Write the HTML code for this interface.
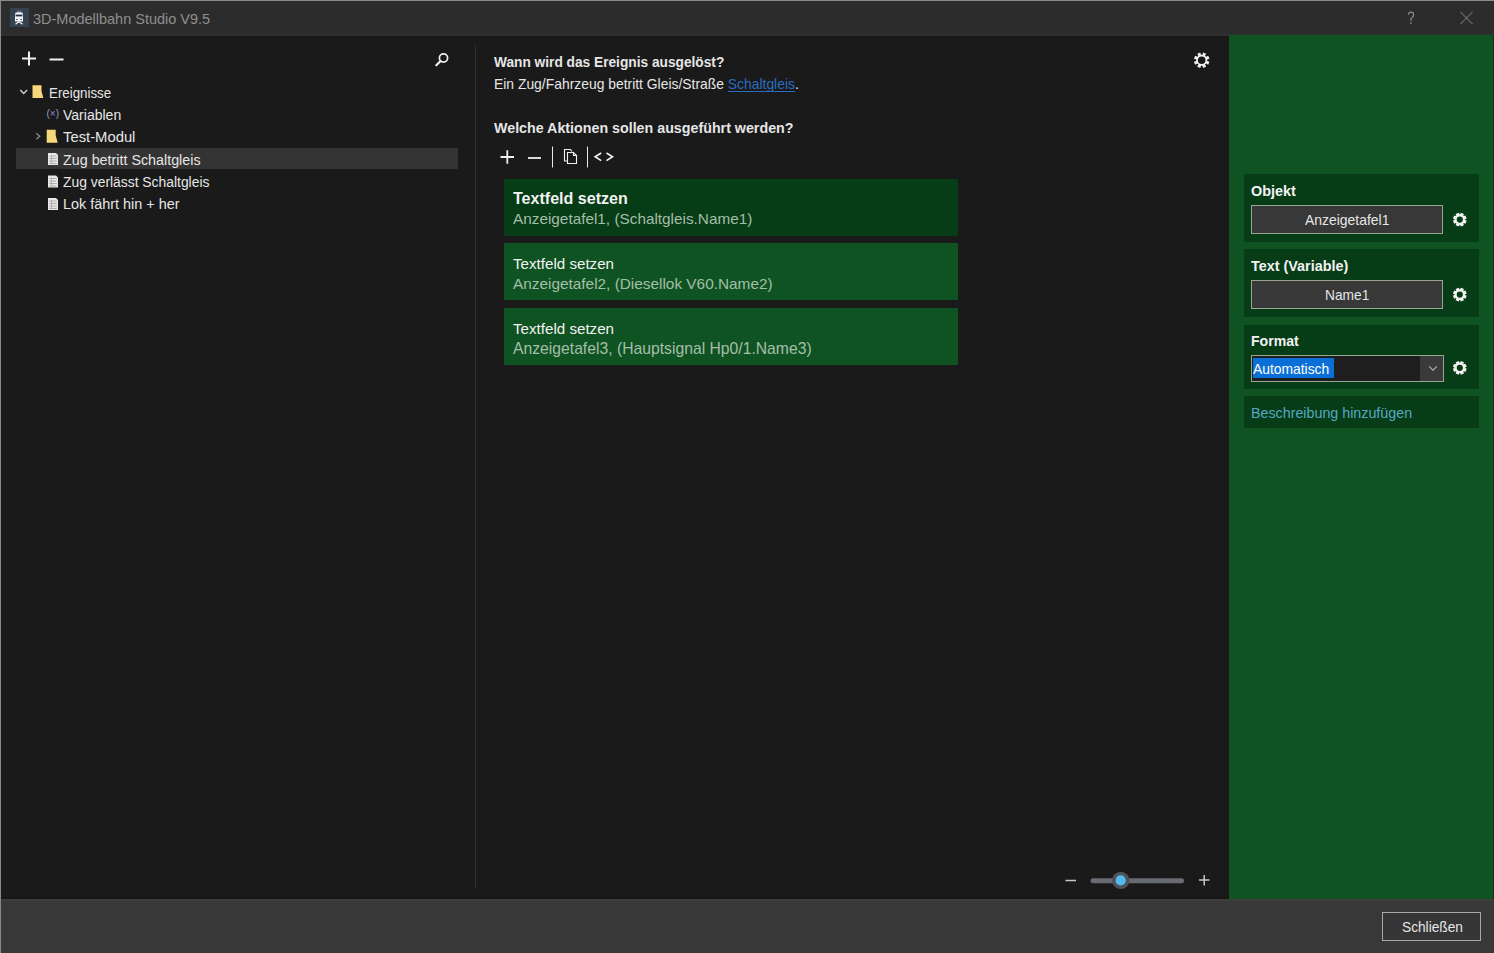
<!DOCTYPE html>
<html><head><meta charset="utf-8">
<style>
*{margin:0;padding:0;box-sizing:border-box}
html,body{width:1494px;height:953px;overflow:hidden;background:#1a1a1a;font-family:"Liberation Sans",sans-serif;color:#e6e6e6}
.a{position:absolute}
.t{position:absolute;white-space:nowrap;line-height:1}
.b{font-weight:bold}
svg{position:absolute;overflow:visible}
</style></head><body>
<!-- window border -->
<div class="a" style="left:0;top:0;width:1494px;height:1px;background:#8a8a8a"></div>
<div class="a" style="left:0;top:0;width:1px;height:953px;background:#8a8a8a"></div>
<!-- title bar -->
<div class="a" style="left:1px;top:1px;width:1493px;height:35px;background:#2c2c2c"></div>
<div class="a" style="left:1px;top:34px;width:1493px;height:2px;background:#2f2f2f"></div>
<div class="a" style="left:1px;top:36px;width:1228px;height:1px;background:#171717"></div>
<div class="a" style="left:10px;top:8px;width:19px;height:19px;background:#34434f"></div>
<svg style="left:0;top:0" width="40" height="35">
  <path d="M15 14.5 Q15 12.3 17 12.3 L21 12.3 Q23 12.3 23 14.5 L23 21.5 L15 21.5 Z" fill="#f2f4f6"/>
  <rect x="15.6" y="14.6" width="6.8" height="1.8" fill="#2a3440"/>
  <rect x="16" y="19" width="1.6" height="1" fill="#55606a"/>
  <rect x="20.4" y="19" width="1.6" height="1" fill="#55606a"/>
  <path d="M15.5 24.2 L19 21.5 L22.5 24.2" stroke="#f2f4f6" stroke-width="1.3" fill="none"/>
  <path d="M18.3 12.3 L17.8 10.5 M19.7 12.3 L20.4 10.5" stroke="#aab" stroke-width="0.8"/>
</svg>
<div id="title" class="t" style="left:33px;top:11.5px;font-size:14.4px;color:#8f8f8f;transform:scaleX(1.0064);transform-origin:0 0">3D-Modellbahn Studio V9.5</div>

<svg style="left:0;top:0" width="1494" height="35">
  <path d="M1460.5 12 L1472.5 24 M1472.5 12 L1460.5 24" stroke="#8a8a8a" stroke-width="1"/>
  <path d="M1408.3 14.6 Q1408.8 12.2 1411 12.2 Q1413.6 12.2 1413.6 14.8 Q1413.6 16.6 1411.8 17.8 Q1410.9 18.5 1410.9 19.6 V21" stroke="#8a8a8a" stroke-width="1.2" fill="none"/>
  <rect x="1410.2" y="22.4" width="1.5" height="1.5" fill="#8a8a8a"/>
</svg>

<!-- divider -->
<div class="a" style="left:475px;top:45px;width:1px;height:843px;background:#303030"></div>

<!-- ===== LEFT TREE ===== -->
<svg style="left:0;top:0" width="476" height="230">
  <g stroke="#f0f0f0" stroke-width="2" fill="none">
    <path d="M22 58.5 H36 M29 51.5 V65.5"/>
    <path d="M49.5 59.5 H63.5"/>
  </g>
  <g stroke="#f0f0f0" fill="none">
    <circle cx="443.5" cy="58" r="4.1" stroke-width="1.7"/>
    <path d="M440.6 61 L436.3 65.3" stroke-width="2.2" stroke-linecap="round"/>
  </g>
  <!-- chevron down -->
  <path d="M20.3 90 L23.7 93.5 L27.1 90" stroke="#d0d0d0" stroke-width="1.5" fill="none"/>
  <!-- chevron right -->
  <path d="M36.2 133.3 L39.8 136.3 L36.2 139.3" stroke="#8a8a8a" stroke-width="1.3" fill="none"/>
  <!-- folders -->
  <path d="M32.5 85.2 H41.5 V91 L43.3 98 H32.5 Z" fill="#f6d77a"/>
  <path d="M46.7 129.8 H55.7 V135.5 L57.7 142.8 H46.7 Z" fill="#f6d77a"/>
  <!-- (x) -->
  <text x="46.5" y="117.2" font-family="Liberation Sans" font-size="10" fill="#9a9cb8">(<tspan fill="#7f95d6">×</tspan>)</text>
  <!-- docs -->
  <g fill="#e8e8e8">
    <path d="M48 153 H56 L58 155 V165 H48 Z"/>
    <path d="M48 175.5 H56 L58 177.5 V187.5 H48 Z"/>
    <path d="M48 198 H56 L58 200 V210 H48 Z"/>
  </g>
  <g fill="#a8a8a8"><rect x="49.3" y="155.6" width="7.4" height="0.9"/><rect x="49.3" y="158.1" width="7.4" height="0.9"/><rect x="49.3" y="160.6" width="7.4" height="0.9"/><rect x="49.3" y="163.1" width="7.4" height="0.9"/><rect x="51" y="155.0" width="0.8" height="9"/><rect x="49.3" y="178.1" width="7.4" height="0.9"/><rect x="49.3" y="180.6" width="7.4" height="0.9"/><rect x="49.3" y="183.1" width="7.4" height="0.9"/><rect x="49.3" y="185.6" width="7.4" height="0.9"/><rect x="51" y="177.5" width="0.8" height="9"/><rect x="49.3" y="200.6" width="7.4" height="0.9"/><rect x="49.3" y="203.1" width="7.4" height="0.9"/><rect x="49.3" y="205.6" width="7.4" height="0.9"/><rect x="49.3" y="208.1" width="7.4" height="0.9"/><rect x="51" y="200.0" width="0.8" height="9"/></g>
</svg>
<div class="a" style="left:16px;top:148px;width:442px;height:21px;background:#343434"></div>
<svg style="left:0;top:0" width="476" height="230">
  <path d="M48 153 H56 L58 155 V165 H48 Z" fill="#e8e8e8"/>
  <g fill="#a8a8a8"><rect x="49.3" y="155.6" width="7.4" height="0.9"/><rect x="49.3" y="158.1" width="7.4" height="0.9"/><rect x="49.3" y="160.6" width="7.4" height="0.9"/><rect x="49.3" y="163.1" width="7.4" height="0.9"/><rect x="51" y="155.0" width="0.8" height="9"/></g>
</svg>
<div id="ereig" class="t" style="left:49px;top:87.2px;font-size:13.8px;transform:scaleX(0.9652);transform-origin:0 0">Ereignisse</div>
<div id="var" class="t" style="left:63px;top:109.3px;font-size:13.8px;transform:scaleX(1.0159);transform-origin:0 0">Variablen</div>
<div id="test" class="t" style="left:63px;top:131.3px;font-size:13.8px;transform:scaleX(1.0732);transform-origin:0 0">Test-Modul</div>
<div id="zugb" class="t" style="left:63px;top:153.6px;font-size:13.8px;transform:scaleX(1.0369);transform-origin:0 0">Zug betritt Schaltgleis</div>
<div id="zugv" class="t" style="left:63px;top:176.2px;font-size:13.8px;transform:scaleX(1.0048);transform-origin:0 0">Zug verlässt Schaltgleis</div>
<div id="lok" class="t" style="left:63px;top:198.3px;font-size:13.8px;transform:scaleX(1.0441);transform-origin:0 0">Lok fährt hin + her</div>

<!-- ===== CENTER ===== -->
<div id="wann" class="t b" style="left:494.00px;top:56.2px;font-size:13.72px;transform:scaleX(0.9992);transform-origin:0 0">Wann wird das Ereignis ausgelöst?</div>
<div id="ein" class="t" style="left:494px;top:78.1px;font-size:13.76px;transform:scaleX(1.0097);transform-origin:0 0">Ein Zug/Fahrzeug betritt Gleis/Straße <span style="color:#2c6bc0;text-decoration:underline;text-underline-offset:2px;text-decoration-skip-ink:none">Schaltgleis</span>.</div>
<div id="welche" class="t b" style="left:494.00px;top:121.2px;font-size:14.2px;transform:scaleX(1.0050);transform-origin:0 0">Welche Aktionen sollen ausgeführt werden?</div>
<svg style="left:0;top:0" width="1230" height="200">
  <g stroke="#f0f0f0" stroke-width="1.8" fill="none">
    <path d="M500.5 157 H514 M507.3 150.3 V163.7"/>
    <path d="M528 158 H541"/>
  </g>
  <g stroke="#e8e8e8" stroke-width="1">
    <path d="M552.5 146.5 V167.5 M587.5 146.5 V167.5"/>
  </g>
  <g stroke="#f0f0f0" stroke-width="1.1" fill="none">
    <path d="M567 161 H564.5 V149.5 H570.5 L572 151.5"/>
    <path d="M567.5 152.5 H573.5 L576.5 155.5 V163.5 H567.5 Z"/>
    <path d="M573.5 152.5 V155.5 H576.5"/>
  </g>
  <g stroke="#f0f0f0" stroke-width="1.7" fill="none">
    <path d="M601.2 153 L595.2 156.8 L601.2 160.6"/>
    <path d="M606.5 153 L612.5 156.8 L606.5 160.6"/>
  </g>
  <!-- gear -->
  <defs><path id="gear2" fill="#f2f2f2" fill-rule="evenodd" d="M0.32 -5.29 L1.03 -6.92 L4.16 -5.63 L3.51 -3.97 L3.97 -3.51 L5.63 -4.16 L6.92 -1.03 L5.29 -0.32 L5.29 0.32 L6.92 1.03 L5.63 4.16 L3.97 3.51 L3.51 3.97 L4.16 5.63 L1.03 6.92 L0.32 5.29 L-0.32 5.29 L-1.03 6.92 L-4.16 5.63 L-3.51 3.97 L-3.97 3.51 L-5.63 4.16 L-6.92 1.03 L-5.29 0.32 L-5.29 -0.32 L-6.92 -1.03 L-5.63 -4.16 L-3.97 -3.51 L-3.51 -3.97 L-4.16 -5.63 L-1.03 -6.92 L-0.32 -5.29Z M3.10 0 A3.10 3.10 0 1 0 -3.10 0 A3.10 3.10 0 1 0 3.10 0Z"/><path id="gear" fill="#f2f2f2" fill-rule="evenodd" d="M0.72 -5.45 L1.44 -7.77 L4.47 -6.51 L3.35 -4.36 L4.36 -3.35 L6.51 -4.47 L7.77 -1.44 L5.45 -0.72 L5.45 0.72 L7.77 1.44 L6.51 4.47 L4.36 3.35 L3.35 4.36 L4.47 6.51 L1.44 7.77 L0.72 5.45 L-0.72 5.45 L-1.44 7.77 L-4.47 6.51 L-3.35 4.36 L-4.36 3.35 L-6.51 4.47 L-7.77 1.44 L-5.45 0.72 L-5.45 -0.72 L-7.77 -1.44 L-6.51 -4.47 L-4.36 -3.35 L-3.35 -4.36 L-4.47 -6.51 L-1.44 -7.77 L-0.72 -5.45Z M3.80 0 A3.80 3.80 0 1 0 -3.80 0 A3.80 3.80 0 1 0 3.80 0Z"/></defs>
  <use href="#gear" transform="translate(1201.7,60.2)"/>
</svg>

<!-- cards -->
<div class="a" style="left:504px;top:179px;width:454px;height:57px;background:#063c16"></div>
<div class="a" style="left:504px;top:243px;width:454px;height:57px;background:#105323"></div>
<div class="a" style="left:504px;top:308px;width:454px;height:57px;background:#105323"></div>
<div id="tf1" class="t b" style="left:513.00px;top:190.5px;font-size:15.9px;color:#f2f2f2;transform:scaleX(1.0106);transform-origin:0 0">Textfeld setzen</div>
<div id="sub1" class="t" style="left:513.00px;top:211.1px;font-size:15.35px;color:#a3bfa8;transform:scaleX(0.9988);transform-origin:0 0">Anzeigetafel1, (Schaltgleis.Name1)</div>
<div id="tf2" class="t" style="left:513.00px;top:255.6px;font-size:15.4px;color:#f2f2f2;transform:scaleX(0.9842);transform-origin:0 0">Textfeld setzen</div>
<div id="sub2" class="t" style="left:513.00px;top:275.8px;font-size:15.35px;color:#a3bfa8;transform:scaleX(1.0012);transform-origin:0 0">Anzeigetafel2, (Diesellok V60.Name2)</div>
<div id="tf3" class="t" style="left:513.00px;top:320.9px;font-size:15.4px;color:#f2f2f2;transform:scaleX(0.9842);transform-origin:0 0">Textfeld setzen</div>
<div id="sub3" class="t" style="left:513.00px;top:340.6px;font-size:15.72px;color:#a3bfa8;transform:scaleX(0.9994);transform-origin:0 0">Anzeigetafel3, (Hauptsignal Hp0/1.Name3)</div>

<!-- slider -->
<svg style="left:0;top:0" width="1230" height="900">
  <path d="M1065.5 880.5 H1076" stroke="#c8c8c8" stroke-width="1.5"/>
  <path d="M1199 880 H1209.5 M1204.2 875 V885.5" stroke="#c8c8c8" stroke-width="1.5"/>
  <rect x="1090.5" y="878.3" width="93.5" height="5" rx="2.5" fill="#686b72"/>
  <circle cx="1120.7" cy="880.4" r="8.7" fill="#4d525b"/>
  <circle cx="1120.7" cy="880.4" r="5.1" fill="#55baf0"/>
</svg>

<!-- ===== GREEN PANEL ===== -->
<div class="a" style="left:1229px;top:35px;width:264px;height:864px;background:#105323"></div>
<div class="a" style="left:1493px;top:35px;width:1px;height:864px;background:#1a2a1c"></div>

<div class="a" style="left:1244px;top:174px;width:235px;height:68px;background:#063c16"></div>
<div class="a" style="left:1244px;top:249px;width:235px;height:68px;background:#063c16"></div>
<div class="a" style="left:1244px;top:325px;width:235px;height:64px;background:#063c16"></div>
<div class="a" style="left:1244px;top:396px;width:235px;height:32px;background:#063c16"></div>

<div id="objekt" class="t b" style="left:1251px;top:184.2px;font-size:14.4px;color:#f2f2f2;transform:scaleX(1.0024);transform-origin:0 0">Objekt</div>
<div class="a" style="left:1251px;top:205px;width:192px;height:29px;border:1px solid #98a592;background:#383838"></div>
<div id="anz" class="t" style="left:1305px;top:214.1px;font-size:13.86px;color:#e6e6e6;transform:scaleX(1.0048);transform-origin:0 0">Anzeigetafel1</div>

<div id="textvar" class="t b" style="left:1251px;top:258.8px;font-size:14.4px;color:#f2f2f2;transform:scaleX(0.9990);transform-origin:0 0">Text (Variable)</div>
<div class="a" style="left:1251px;top:280px;width:192px;height:29px;border:1px solid #98a592;background:#383838"></div>
<div id="name1" class="t" style="left:1325px;top:289.1px;font-size:13.86px;color:#e6e6e6;transform:scaleX(0.9936);transform-origin:0 0">Name1</div>

<div id="format" class="t b" style="left:1251px;top:335.2px;font-size:13.9px;color:#f2f2f2;transform:scaleX(1.0133);transform-origin:0 0">Format</div>
<div class="a" style="left:1251px;top:355px;width:193px;height:27px;border:1px solid #98a592;background:#1e1e1e"></div>
<div class="a" style="left:1420px;top:356px;width:23px;height:25px;background:#3a3a3a"></div>
<div class="a" style="left:1253px;top:357.5px;width:81px;height:20.5px;background:#0a6fd6"></div>
<div id="autom" class="t" style="left:1253px;top:362.2px;font-size:14.4px;color:#ffffff;transform:scaleX(0.9627);transform-origin:0 0">Automatisch</div>
<svg style="left:0;top:0" width="1494" height="440">
  <path d="M1429.2 366.3 L1433 370.3 L1436.8 366.3" stroke="#b8b8b8" stroke-width="1.1" fill="none"/>
  <use href="#gear2" transform="translate(1459.8,219.6)"/>
  <use href="#gear2" transform="translate(1459.8,294.6)"/>
  <use href="#gear2" transform="translate(1459.8,367.8)"/>
</svg>

<div id="besch" class="t" style="left:1251px;top:406.1px;font-size:14.1px;color:#58a7c2;transform:scaleX(1.0127);transform-origin:0 0">Beschreibung hinzufügen</div>

<!-- bottom bar -->
<div class="a" style="left:1px;top:897px;width:1228px;height:2px;background:#171717"></div>
<div class="a" style="left:1px;top:899px;width:1493px;height:54px;background:#383838"></div>
<div class="a" style="left:1px;top:899px;width:1493px;height:2px;background:#3c3c3c"></div>
<div class="a" style="left:1382px;top:912px;width:99px;height:29px;border:1px solid #a8a8a8;background:#363636"></div>
<div id="schl" class="t" style="left:1402px;top:920px;font-size:14.4px;color:#e6e6e6;transform:scaleX(0.9523);transform-origin:0 0">Schließen</div>

</body></html>
